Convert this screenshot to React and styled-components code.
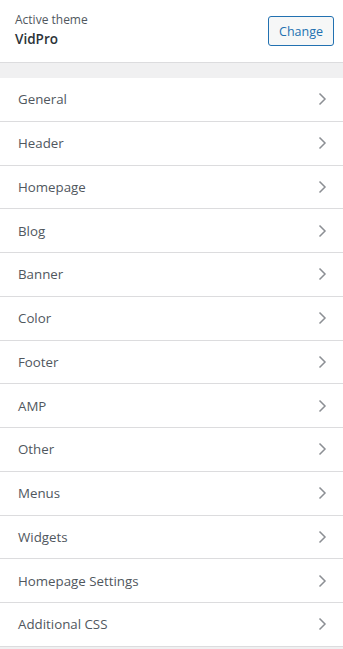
import React from "react";
import styled, { createGlobalStyle } from "styled-components";

const Global = createGlobalStyle`
  html, body { margin: 0; padding: 0; background: #f0f0f1; }
  body { font-family: "Open Sans", "Noto Sans", sans-serif; -webkit-font-smoothing: antialiased; }
  * { box-sizing: border-box; }
`;

const Panel = styled.div`
  width: 343px;
  height: 649px;
  background: #f0f0f1;
  overflow: hidden;
`;

const ThemeBar = styled.div`
  height: 63px;
  background: #fff;
  border-bottom: 1px solid #dcdcde;
  display: flex;
  align-items: flex-start;
  justify-content: space-between;
  padding: 11px 9px 0 15px;
`;

const ThemeInfo = styled.div`
  display: flex;
  flex-direction: column;
  gap: 1px;
`;

const Label = styled.span`
  font-size: 12px;
  line-height: 18px;
  color: #50575e;
`;

const ThemeName = styled.span`
  font-size: 13.5px;
  font-weight: 600;
  line-height: 19px;
  color: #2c3338;
`;

const ChangeButton = styled.button`
  margin-top: 5px;
  width: 66px;
  height: 30px;
  border: 1px solid #2271b1;
  border-radius: 3px;
  background: #f6f7f7;
  color: #2271b1;
  font-family: inherit;
  font-size: 12.5px;
  padding: 0;
  cursor: pointer;
`;

const Spacer = styled.div`
  height: 15px;
`;

const List = styled.ul`
  list-style: none;
  margin: 0;
  padding: 0;
`;

const Row = styled.li`
  height: 43.75px;
  background: #fff;
  border-bottom: 1px solid #dcdcde;
  display: flex;
  align-items: center;
  justify-content: space-between;
  padding: 0 16px 0 18px;
  font-size: 13.3px;
  color: #50575e;
`;

const Chevron = () => (
  <svg width="10" height="14" viewBox="0 0 10 14" fill="none">
    <path d="M2.5 1.5 L8 7 L2.5 12.5" stroke="#8c8f94" strokeWidth="1.5" />
  </svg>
);

const items = [
  "General",
  "Header",
  "Homepage",
  "Blog",
  "Banner",
  "Color",
  "Footer",
  "AMP",
  "Other",
  "Menus",
  "Widgets",
  "Homepage Settings",
  "Additional CSS",
];

export default function App() {
  return (
    <Panel>
      <Global />
      <ThemeBar>
        <ThemeInfo>
          <Label>Active theme</Label>
          <ThemeName>VidPro</ThemeName>
        </ThemeInfo>
        <ChangeButton>Change</ChangeButton>
      </ThemeBar>
      <Spacer />
      <List>
        {items.map((t) => (
          <Row key={t}>
            <span>{t}</span>
            <Chevron />
          </Row>
        ))}
      </List>
    </Panel>
  );
}
